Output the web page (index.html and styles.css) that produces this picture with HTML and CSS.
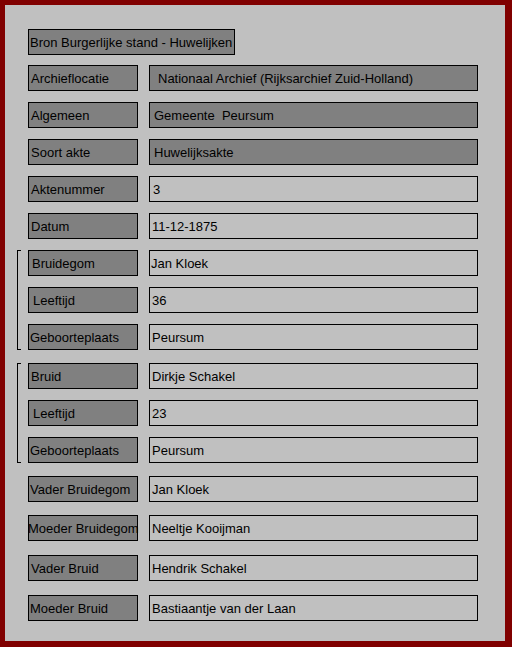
FILE: index.html
```html
<!DOCTYPE html>
<html>
<head>
<meta charset="utf-8">
<link rel="stylesheet" href="styles.css">
</head>
<body>
<div class="sheet">
  <div class="title">Bron Burgerlijke stand - Huwelijken</div>

  <div class="section sec1">
    <div class="row"><div class="label">Archieflocatie</div><div class="value dark pad-xl">Nationaal Archief (Rijksarchief Zuid-Holland)</div></div>
    <div class="row"><div class="label">Algemeen</div><div class="value dark pad-l">Gemeente  Peursum</div></div>
    <div class="row"><div class="label">Soort akte</div><div class="value dark pad-l">Huwelijksakte</div></div>
    <div class="row"><div class="label">Aktenummer</div><div class="value pad-m">3</div></div>
    <div class="row"><div class="label">Datum</div><div class="value pad-s">11-12-1875</div></div>
  </div>

  <div class="group group1">
    <div class="bracket"></div>
    <div class="section">
      <div class="row"><div class="label pad-m">Bruidegom</div><div class="value">Jan Kloek</div></div>
      <div class="row"><div class="label pad-l">Leeftijd</div><div class="value pad-s">36</div></div>
      <div class="row"><div class="label pad-0">Geboorteplaats</div><div class="value pad-s">Peursum</div></div>
    </div>
  </div>

  <div class="group group2">
    <div class="bracket"></div>
    <div class="section">
      <div class="row"><div class="label">Bruid</div><div class="value pad-s">Dirkje Schakel</div></div>
      <div class="row"><div class="label pad-l">Leeftijd</div><div class="value pad-s">23</div></div>
      <div class="row"><div class="label pad-0">Geboorteplaats</div><div class="value pad-s">Peursum</div></div>
    </div>
  </div>

  <div class="section sec2">
    <div class="row"><div class="label pad-0">Vader Bruidegom</div><div class="value pad-s">Jan Kloek</div></div>
    <div class="row"><div class="label pad-neg">Moeder Bruidegom</div><div class="value pad-s">Neeltje Kooijman</div></div>
    <div class="row"><div class="label">Vader Bruid</div><div class="value pad-s">Hendrik Schakel</div></div>
    <div class="row"><div class="label pad-1">Moeder Bruid</div><div class="value pad-s">Bastiaantje van der Laan</div></div>
  </div>
</div>
</body>
</html>
```

FILE: styles.css
```css
html, body {
  margin: 0;
  padding: 0;
}
body {
  background: #800000;
  padding: 5px 7px 6px 5px;
  width: 500px;
  font-family: "Liberation Sans", Arial, sans-serif;
  font-size: 13px;
  color: #000;
}
.sheet {
  box-sizing: border-box;
  width: 500px;
  height: 636px;
  background: #c0c0c0;
  padding: 24px 0 0 23px;
  display: flex;
  flex-direction: column;
}
.title {
  box-sizing: border-box;
  width: 207px;
  height: 26px;
  line-height: 24px;
  padding-top: 1px;
  border: 1px solid #000;
  background: #808080;
  padding-left: 1px;
  white-space: nowrap;
}
.section {
  display: flex;
  flex-direction: column;
  gap: 11px;
}
.sec1 { margin-top: 10px; }
.group1 { margin-top: 11px; }
.group2 { margin-top: 13px; }
.sec2 { margin-top: 13px; gap: 14px; }
.sec2 .row:nth-child(2) { margin-top: -1px; }
.group {
  display: flex;
  margin-left: -11px;
  gap: 7px;
}
.bracket {
  box-sizing: border-box;
  width: 4px;
  border-left: 1px solid #000;
  border-top: 1px solid #000;
  border-bottom: 1px solid #000;
}
.row {
  display: flex;
  gap: 11px;
  height: 26px;
}
.label, .value {
  box-sizing: border-box;
  height: 26px;
  line-height: 24px;
  padding-top: 1px;
  border: 1px solid #000;
  white-space: pre;
  overflow: visible;
}
.label {
  width: 110px;
  background: #808080;
  padding-left: 2px;
}
.value {
  width: 329px;
  background: #c0c0c0;
  padding-left: 1px;
}
.value.dark { background: #808080; }
.pad-0 { padding-left: 1px; }
.pad-neg { padding-left: 0; text-indent: -1px; }
.pad-1 { padding-left: 1px; }
.pad-s { padding-left: 2px; }
.pad-m { padding-left: 3px; }
.pad-l { padding-left: 4px; }
.pad-xl { padding-left: 8px; }
```
